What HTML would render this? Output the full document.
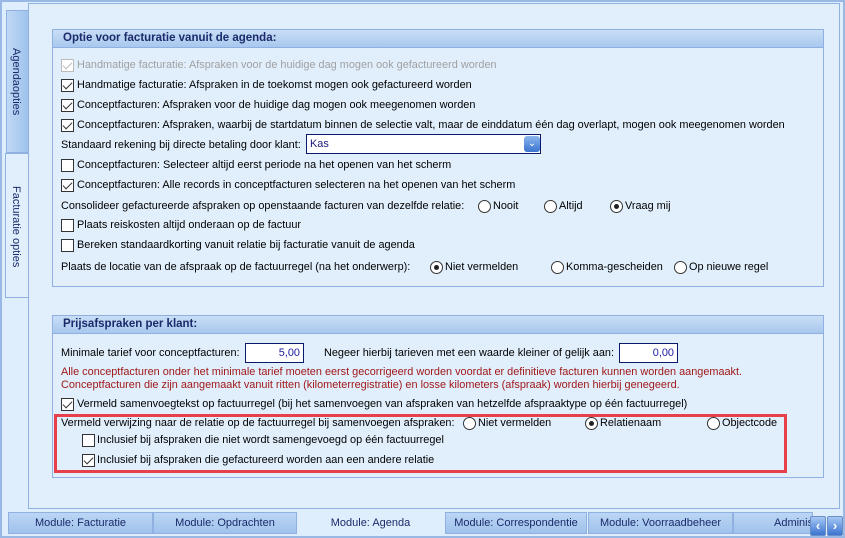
<!DOCTYPE html>
<html><head><meta charset="utf-8"><style>
*{margin:0;padding:0;box-sizing:border-box}
body{width:845px;height:538px;background:#dfeefc;font-family:"Liberation Sans",sans-serif;font-size:10.9px;color:#000;position:relative;overflow:hidden}
.a{position:absolute;white-space:nowrap}
.outer{position:absolute;left:0;top:0;width:845px;height:538px;border:2px solid #9ab8e4;background:#dfeefc}
.panel{position:absolute;left:28px;top:3px;width:812px;height:506px;border:1px solid #8fb0e0;background:#e1effd}
.grp{position:absolute;border:1px solid #8fb0e0;background:#e1effd}
.gh{position:absolute;left:0;top:0;right:0;height:18px;background:linear-gradient(180deg,#c9def6,#a8c8ee);border-bottom:1px solid #8fb0e0;font-weight:bold;color:#1a2a6a;font-size:11.5px;padding:2px 0 0 10px}
.cb{position:absolute;width:13px;height:13px;border:1px solid #333;background:#fff}
.cb.c::after{content:"";position:absolute;left:3px;top:0px;width:4px;height:8px;border:solid #333;border-width:0 1.5px 1.5px 0;transform:rotate(45deg)}
.cb.d{border-color:#bbb}.cb.d::after{border-color:#bbb}
.rb{position:absolute;width:13px;height:13px;border:1px solid #333;border-radius:50%;background:#fff}
.rb.s::after{content:"";position:absolute;left:3px;top:3px;width:5px;height:5px;border-radius:50%;background:#222}
.in{position:absolute;border:1px solid #0a1a6a;background:#fff;color:#1a1aa0;text-align:right;padding:3px 3px;height:20px}
.red{color:#a01818}
.vt{position:absolute;border:1px solid #8fb0e0}
.bt{position:absolute;top:512px;height:22px;border:1px solid #8fb0e0;background:linear-gradient(180deg,#bcd6f4,#9fc2ec);color:#1a2a6a;font-size:11px;text-align:center;padding-top:4px;overflow:hidden;white-space:nowrap}
.arr{position:absolute;top:516px;width:16px;height:20px;border:1px solid #6c8fc8;border-radius:2px;background:linear-gradient(#a8c8f4,#3a74d0);color:#fff;font-size:13px;text-align:center;line-height:18px;font-weight:bold}
</style></head><body>
<div class="outer"></div>
<div class="vt" style="left:6px;top:10px;width:23px;height:143px;background:linear-gradient(90deg,#c0d8f5,#9fc2ec)"></div>
<div class="a" style="left:22px;top:48px;transform:rotate(90deg);transform-origin:0 0;color:#1a2a6a;font-size:11px">Agendaopties</div>
<div class="vt" style="left:5px;top:153px;width:24px;height:145px;background:#e1effd;border-right:none"></div>
<div class="a" style="left:22px;top:186px;transform:rotate(90deg);transform-origin:0 0;color:#1a2a6a;font-size:11px">Facturatie opties</div>
<div class="panel"></div>

<div class="grp" style="left:52px;top:29px;width:772px;height:258px"><div class="gh">Optie voor facturatie vanuit de agenda:</div></div>
<div class="cb c d" style="left:61px;top:59px"></div><div class="a" style="left:77px;top:59px;color:#a0a0a0">Handmatige facturatie: Afspraken voor de huidige dag mogen ook gefactureerd worden</div>
<div class="cb c" style="left:61px;top:79px"></div><div class="a" style="left:77px;top:79px">Handmatige facturatie: Afspraken in de toekomst mogen ook gefactureerd worden</div>
<div class="cb c" style="left:61px;top:99px"></div><div class="a" style="left:77px;top:99px">Conceptfacturen: Afspraken voor de huidige dag mogen ook meegenomen worden</div>
<div class="cb c" style="left:61px;top:119px"></div><div class="a" style="left:77px;top:119px">Conceptfacturen: Afspraken, waarbij de startdatum binnen de selectie valt, maar de einddatum één dag overlapt, mogen ook meegenomen worden</div>
<div class="a" style="left:61px;top:139px">Standaard rekening bij directe betaling door klant:</div>
<div class="in" style="left:306px;top:134px;width:235px;text-align:left;color:#1a1a80">Kas</div>
<div class="a" style="left:524px;top:136px;width:16px;height:16px;border-radius:3px;background:linear-gradient(#8cb6ee,#3a74d0);color:#fff;font-size:10px;text-align:center;line-height:16px">&#8964;</div>
<div class="cb" style="left:61px;top:159px"></div><div class="a" style="left:77px;top:159px">Conceptfacturen: Selecteer altijd eerst periode na het openen van het scherm</div>
<div class="cb c" style="left:61px;top:179px"></div><div class="a" style="left:77px;top:179px">Conceptfacturen: Alle records in conceptfacturen selecteren na het openen van het scherm</div>
<div class="a" style="left:61px;top:200px">Consolideer gefactureerde afspraken op openstaande facturen van dezelfde relatie:</div>
<div class="rb" style="left:478px;top:200px"></div><div class="a" style="left:493px;top:200px">Nooit</div>
<div class="rb" style="left:544px;top:200px"></div><div class="a" style="left:559px;top:200px">Altijd</div>
<div class="rb s" style="left:610px;top:200px"></div><div class="a" style="left:625px;top:200px">Vraag mij</div>
<div class="cb" style="left:61px;top:219px"></div><div class="a" style="left:77px;top:219px">Plaats reiskosten altijd onderaan op de factuur</div>
<div class="cb" style="left:61px;top:239px"></div><div class="a" style="left:77px;top:239px">Bereken standaardkorting vanuit relatie bij facturatie vanuit de agenda</div>
<div class="a" style="left:61px;top:261px">Plaats de locatie van de afspraak op de factuurregel (na het onderwerp):</div>
<div class="rb s" style="left:430px;top:261px"></div><div class="a" style="left:445px;top:261px">Niet vermelden</div>
<div class="rb" style="left:551px;top:261px"></div><div class="a" style="left:566px;top:261px">Komma-gescheiden</div>
<div class="rb" style="left:674px;top:261px"></div><div class="a" style="left:689px;top:261px">Op nieuwe regel</div>

<div class="grp" style="left:52px;top:315px;width:772px;height:163px"><div class="gh">Prijsafspraken per klant:</div></div>
<div class="a" style="left:61px;top:347px">Minimale tarief voor conceptfacturen:</div>
<div class="in" style="left:245px;top:343px;width:59px">5,00</div>
<div class="a" style="left:324px;top:347px">Negeer hierbij tarieven met een waarde kleiner of gelijk aan:</div>
<div class="in" style="left:619px;top:343px;width:59px">0,00</div>
<div class="a red" style="left:61px;top:366px">Alle conceptfacturen onder het minimale tarief moeten eerst gecorrigeerd worden voordat er definitieve facturen kunnen worden aangemaakt.</div>
<div class="a red" style="left:61px;top:379px">Conceptfacturen die zijn aangemaakt vanuit ritten (kilometerregistratie) en losse kilometers (afspraak) worden hierbij genegeerd.</div>
<div class="cb c" style="left:61px;top:398px"></div><div class="a" style="left:77px;top:398px">Vermeld samenvoegtekst op factuurregel (bij het samenvoegen van afspraken van hetzelfde afspraaktype op één factuurregel)</div>
<div class="a" style="left:54px;top:414px;width:733px;height:59px;border:3px solid #e8404a"></div>
<div class="a" style="left:61px;top:417px">Vermeld verwijzing naar de relatie op de factuurregel bij samenvoegen afspraken:</div>
<div class="rb" style="left:463px;top:417px"></div><div class="a" style="left:478px;top:417px">Niet vermelden</div>
<div class="rb s" style="left:585px;top:417px"></div><div class="a" style="left:600px;top:417px">Relatienaam</div>
<div class="rb" style="left:707px;top:417px"></div><div class="a" style="left:722px;top:417px">Objectcode</div>
<div class="cb" style="left:82px;top:434px"></div><div class="a" style="left:97px;top:434px">Inclusief bij afspraken die niet wordt samengevoegd op één factuurregel</div>
<div class="cb c" style="left:82px;top:454px"></div><div class="a" style="left:97px;top:454px">Inclusief bij afspraken die gefactureerd worden aan een andere relatie</div>

<div class="bt" style="left:8px;width:145px">Module: Facturatie</div>
<div class="bt" style="left:153px;width:144px">Module: Opdrachten</div>
<div class="a" style="left:297px;top:517px;width:147px;text-align:center;color:#1a2a6a;font-size:11px">Module: Agenda</div>
<div class="bt" style="left:445px;width:142px">Module: Correspondentie</div>
<div class="bt" style="left:588px;width:145px">Module: Voorraadbeheer</div>
<div class="bt" style="left:733px;width:80px;text-align:left;padding-left:40px">Adminis</div>
<div class="arr" style="left:810px">&#8249;</div>
<div class="arr" style="left:827px">&#8250;</div>
</body></html>
